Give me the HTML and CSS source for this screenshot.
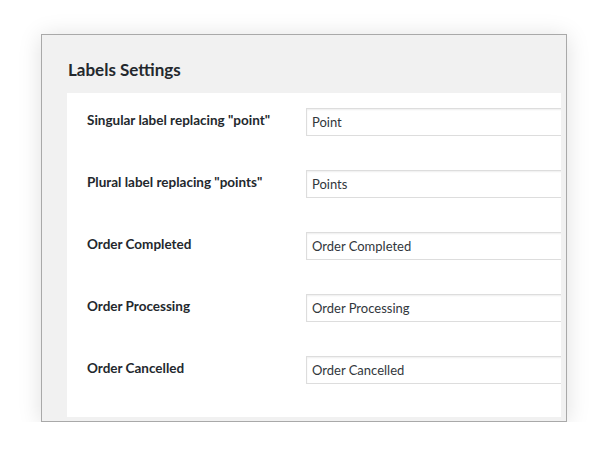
FILE: index.html
```html
<!DOCTYPE html>
<html lang="en">
<head>
<meta charset="utf-8">
<title>Labels Settings</title>
<link rel="stylesheet" href="styles.css">
</head>
<body>
<div class="stage">
  <div class="frame">
    <h2 class="title">Labels Settings</h2>
    <div class="panel">
      <div class="row">
        <label class="label" for="f1">Singular label replacing "point"</label>
        <input class="field" id="f1" type="text" value="Point">
      </div>
      <div class="row">
        <label class="label" for="f2">Plural label replacing "points"</label>
        <input class="field" id="f2" type="text" value="Points">
      </div>
      <div class="row">
        <label class="label" for="f3">Order Completed</label>
        <input class="field" id="f3" type="text" value="Order Completed">
      </div>
      <div class="row">
        <label class="label" for="f4">Order Processing</label>
        <input class="field" id="f4" type="text" value="Order Processing">
      </div>
      <div class="row">
        <label class="label" for="f5">Order Cancelled</label>
        <input class="field" id="f5" type="text" value="Order Cancelled">
      </div>
    </div>
  </div>
</div>
</body>
</html>
```

FILE: styles.css
```css
* { box-sizing: border-box; }
html, body {
  margin: 0;
  background: #ffffff;
  font-family: Lato, "Noto Sans", sans-serif;
  color: #23282d;
}
.stage {
  padding: 34px 0 0 41px;
}
.frame {
  width: 526px;
  height: 388px;
  background: #f1f1f1;
  border: 1px solid #a9a9a9;
  box-shadow: 0 2px 22px rgba(0, 0, 0, 0.13);
  padding: 0 5px 4px 25px;
  display: flex;
  flex-direction: column;
}
.title {
  margin: 0;
  height: 58px;
  padding: 24px 0 0 1px;
  font-size: 17px;
  line-height: 22px;
  font-weight: 700;
  color: #23282d;
}
.panel {
  flex: 1;
  background: #ffffff;
  overflow: hidden;
  padding: 15px 0 0 20px;
  display: flex;
  flex-direction: column;
  gap: 34px;
}
.row {
  display: flex;
  align-items: flex-start;
}
.label {
  width: 219px;
  flex: none;
  margin-top: 3px;
  font-size: 13.5px;
  line-height: 18px;
  font-weight: 700;
  color: #23282d;
}
.field {
  flex: none;
  width: 300px;
  height: 28px;
  margin: 0;
  padding: 0 5px;
  border: 1px solid #dddddd;
  box-shadow: inset 0 1px 2px rgba(0, 0, 0, 0.07);
  background: #ffffff;
  font-family: inherit;
  font-size: 13px;
  color: #32373c;
  outline: none;
}
```
